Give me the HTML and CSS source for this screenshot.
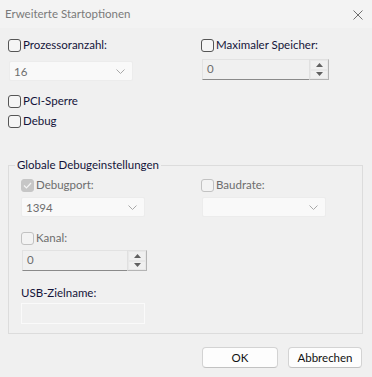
FILE: index.html
```html
<!DOCTYPE html>
<html lang="de">
<head>
<meta charset="utf-8">
<title>Erweiterte Startoptionen</title>
<link rel="stylesheet" href="styles.css">
</head>
<body>
<div class="window">
  <div class="titlebar">
    <span class="title">Erweiterte Startoptionen</span>
    <svg class="close" width="10" height="10" viewBox="0 0 10 10"><path d="M0.5 0.5 L9.5 9.5 M9.5 0.5 L0.5 9.5" stroke="#6e6e6e" stroke-width="1" fill="none"/></svg>
  </div>
  <div class="content">
    <div class="top">
      <div class="col">
        <label class="check"><span class="box"></span><span>Prozessoranzahl:</span></label>
        <div class="combo combo-a"><span class="val">16</span><svg class="chev" width="9" height="5" viewBox="0 0 9 5"><path d="M0.5 0.5 L4.5 4.5 L8.5 0.5" stroke="#a8a8a8" fill="none"/></svg></div>
      </div>
      <div class="col">
        <label class="check"><span class="box"></span><span>Maximaler Speicher:</span></label>
        <div class="spin spin-a"><span class="spin-input">0</span><span class="spin-btns"><span class="sb"><svg width="7" height="4" viewBox="0 0 7 4"><path d="M0 4 L3.5 0 L7 4 Z" fill="#606060"/></svg></span><span class="sb"><svg width="7" height="4" viewBox="0 0 7 4"><path d="M0 0 L3.5 4 L7 0 Z" fill="#606060"/></svg></span></span></div>
      </div>
    </div>
    <label class="check pci"><span class="box"></span><span>PCI-Sperre</span></label>
    <label class="check debug"><span class="box"></span><span>Debug</span></label>
    <fieldset class="group">
      <legend>Globale Debugeinstellungen</legend>
      <div class="grow">
        <div class="col">
          <label class="check dis"><span class="box checked"><svg width="9" height="7" viewBox="0 0 9 7"><path d="M1 3.5 L3.5 6 L8 1" stroke="#f4f4f4" stroke-width="1.2" fill="none"/></svg></span><span>Debugport:</span></label>
          <div class="combo combo-b"><span class="val">1394</span><svg class="chev" width="9" height="5" viewBox="0 0 9 5"><path d="M0.5 0.5 L4.5 4.5 L8.5 0.5" stroke="#a8a8a8" fill="none"/></svg></div>
        </div>
        <div class="col">
          <label class="check dis"><span class="box"></span><span>Baudrate:</span></label>
          <div class="combo combo-c"><span class="val"></span><svg class="chev" width="9" height="5" viewBox="0 0 9 5"><path d="M0.5 0.5 L4.5 4.5 L8.5 0.5" stroke="#a8a8a8" fill="none"/></svg></div>
        </div>
      </div>
      <label class="check dis kanal"><span class="box"></span><span>Kanal:</span></label>
      <div class="spin spin-b"><span class="spin-input">0</span><span class="spin-btns"><span class="sb"><svg width="7" height="4" viewBox="0 0 7 4"><path d="M0 4 L3.5 0 L7 4 Z" fill="#606060"/></svg></span><span class="sb"><svg width="7" height="4" viewBox="0 0 7 4"><path d="M0 0 L3.5 4 L7 0 Z" fill="#606060"/></svg></span></span></div>
      <div class="lbl">USB-Zielname:</div>
      <div class="textbox"></div>
    </fieldset>
    <div class="buttons">
      <button class="btn btn-ok">OK</button>
      <button class="btn btn-cancel">Abbrechen</button>
    </div>
  </div>
</div>
</body>
</html>
```

FILE: styles.css
```css
* { box-sizing: border-box; }
html, body { margin: 0; padding: 0; }
body {
  font-family: Lato, "Noto Sans", sans-serif;
  font-size: 11.5px;
  color: #14143a;
  background: #f0f0f0;
}
.window {
  width: 372px;
  height: 377px;
  background: #f0f0f0;
  overflow: hidden;
}
.titlebar {
  height: 28px;
  background: #f3f3f3;
  display: flex;
  align-items: center;
  justify-content: space-between;
  padding: 0 9px 0 5px;
}
.title {
  color: #7a7a7a;
  font-size: 11.5px;
  line-height: 16px;
}
.close { margin-top: 1px; }
.content {
  padding: 10px 9px 0 8px;
}
.top {
  display: grid;
  grid-template-columns: 193px 1fr;
}
.col { display: flex; flex-direction: column; }
.check {
  display: flex;
  align-items: center;
  gap: 2px;
  height: 14px;
  line-height: 14px;
  white-space: nowrap;
}
.box {
  width: 13px;
  height: 13px;
  border: 1px solid #555;
  border-radius: 3px;
  background: #f5f5f5;
  flex: none;
  display: flex;
  align-items: center;
  justify-content: center;
}
.dis { color: #6d6d6d; }
.dis .box { border-color: #c2c2c2; background: #f3f3f3; }
.dis .box.checked { background: #c6c6c6; border-color: #c6c6c6; }
.combo {
  height: 20px;
  background: #f9f9f9;
  border: 1px solid #ececec;
  border-radius: 2px;
  display: flex;
  align-items: center;
  justify-content: space-between;
  padding: 0 7px 0 4px;
  color: #6d6d6d;
}
.combo-a { width: 124px; margin: 9px 0 0 1px; }
.combo-b { width: 124px; margin-top: 5px; }
.combo-c { width: 124px; margin: 5px 0 0 1px; }
.spin {
  height: 21px;
  display: flex;
}
.spin-a { width: 127px; margin: 7px 0 0 1px; }
.spin-b { width: 125px; margin: 5px 0 0 1px; }
.spin-input {
  flex: 1;
  border-top: 1px solid #e2e2e2;
  border-left: 1px solid #e2e2e2;
  border-bottom: 1px solid #8a8a8a;
  padding-left: 4px;
  line-height: 18px;
  color: #6d6d6d;
  background: #f0f0f0;
}
.spin-btns {
  width: 20px;
  display: flex;
  flex-direction: column;
  border: 1px solid #b4b4b4;
  border-left-color: #e0e0e0;
  border-top-color: #e0e0e0;
}
.sb {
  flex: 1;
  display: flex;
  align-items: center;
  justify-content: center;
  border: 1px solid #e8e8e8;
}
.pci { margin-top: 13px; }
.debug { margin-top: 6px; }
.group {
  margin: 30px 0 0 0;
  border: 1px solid #dcdcdc;
  padding: 6px 12px 9px 12px;
  min-width: 0;
}
.group legend {
  padding: 0 2px;
  margin-left: -6px;
  line-height: 14px;
  color: #14143a;
}
.grow {
  display: grid;
  grid-template-columns: 180px 1fr;
}
.kanal { margin-top: 14px; }
.lbl { margin-top: 15px; line-height: 14px; }
.textbox {
  width: 124px;
  height: 21px;
  margin-top: 3px;
  border: 1px solid #fafafa;
  background: #f0f0f0;
}
.buttons {
  display: flex;
  justify-content: flex-end;
  gap: 10px;
  margin-top: 13px;
  padding-right: 1px;
}
.btn {
  height: 21px;
  font-family: inherit;
  font-size: 11.5px;
  color: #111;
  background: #fdfdfd;
  border: 1px solid #d3d3d3;
  border-bottom-color: #c2c2c2;
  border-radius: 4px;
  padding: 0;
  line-height: 18px;
}
.btn-ok { width: 76px; }
.btn-cancel { width: 74px; }
```
